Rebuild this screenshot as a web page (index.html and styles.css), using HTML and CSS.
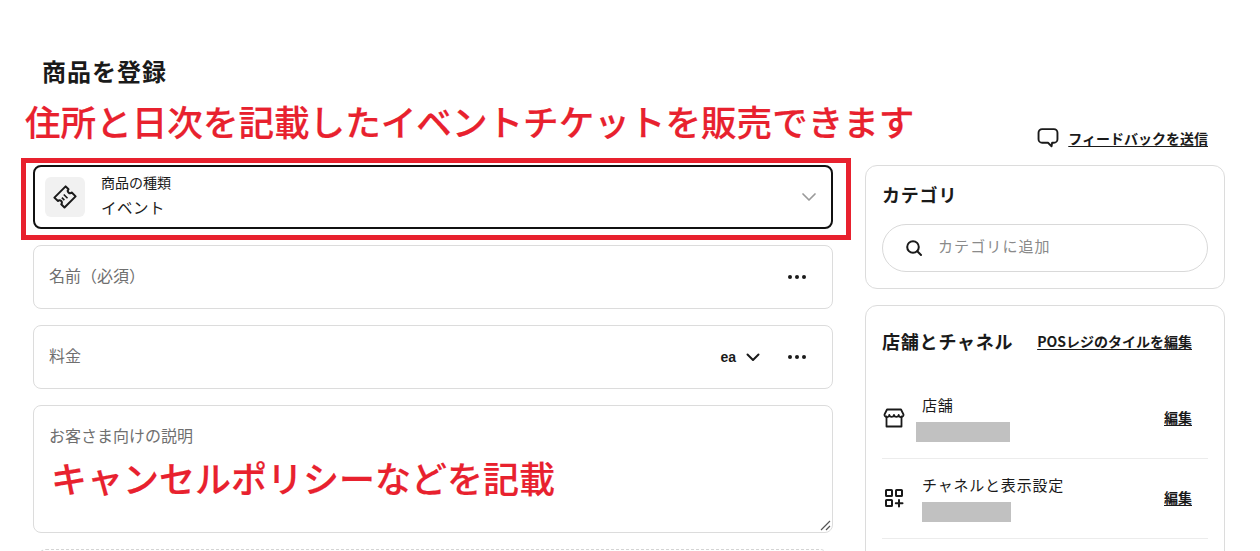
FILE: index.html
```html
<!DOCTYPE html>
<html lang="ja">
<head>
<meta charset="utf-8">
<title>商品を登録</title>
<link rel="stylesheet" href="styles.css">
</head>
<body>
<div class="page">
  <h1 class="title">商品を登録</h1>
  <div class="note note-top">住所と日次を記載したイベントチケットを販売できます</div>
  <div class="feedback">
    <svg class="fb-icon" width="26" height="26" viewBox="0 0 22 22" fill="none" stroke="#1a1a1a" stroke-width="1.6" stroke-linejoin="round" stroke-linecap="round"><path d="M6 3.500h10a3 3 0 0 1 3 3v5.500a3 3 0 0 1-3 3h-1.500l-.5 3-3-3H6a3 3 0 0 1-3-3V6.500a3 3 0 0 1 3-3z"/></svg>
    <a class="link">フィードバックを送信</a>
  </div>
  <div class="columns">
    <div class="col-main">
      <div class="highlight"></div>
      <div class="type-card">
        <div class="type-icon">
          <svg width="30" height="30" viewBox="0 0 24 24" fill="none" stroke="#1a1a1a" stroke-width="1.600" stroke-linejoin="round"><path d="M12.500 3.500l2.300 2.300a1.800 1.800 0 0 0 2.600 2.600l3.100 3.100-8.900 8.900-2.600-2.600a1.800 1.800 0 0 0-2.600-2.600L3.500 12.500z"/><path d="M11 10l3 3M9.500 12.500l2 2" stroke-width="1.300"/></svg>
        </div>
        <div class="type-text">
          <div class="type-label">商品の種類</div>
          <div class="type-value">イベント</div>
        </div>
        <svg class="type-chevron" width="16" height="10" viewBox="0 0 16 10" fill="none" stroke="#9a9a9a" stroke-width="1.7" stroke-linecap="round" stroke-linejoin="round"><path d="M2 2l6 6 6-6"/></svg>
      </div>
      <div class="field">
        <span class="placeholder">名前（必須）</span>
        <span class="dots"><i></i><i></i><i></i></span>
      </div>
      <div class="field">
        <span class="placeholder">料金</span>
        <span class="unit">ea</span>
        <svg class="unit-chevron" width="14" height="9" viewBox="0 0 14 9" fill="none" stroke="#1a1a1a" stroke-width="2" stroke-linecap="round" stroke-linejoin="round"><path d="M1.500 1.500L7 7l5.500-5.500"/></svg>
        <span class="dots"><i></i><i></i><i></i></span>
      </div>
      <div class="field-area">
        <span class="placeholder">お客さま向けの説明</span>
        <div class="note note-desc">キャンセルポリシーなどを記載</div>
        <svg class="resize" width="11" height="11" viewBox="0 0 11 11" fill="none" stroke="#555" stroke-width="1.2"><path d="M1 10L10 1M6 10l4-4"/></svg>
      </div>
      <div class="dropzone"></div>
    </div>
    <div class="col-side">
      <section class="card card-cat">
        <h2 class="card-title">カテゴリ</h2>
        <div class="search">
          <svg width="20" height="20" viewBox="0 0 20 20" fill="none" stroke="#1a1a1a" stroke-width="2" stroke-linecap="round"><circle cx="9" cy="9" r="5.800"/><path d="M13.300 13.300L17 17"/></svg>
          <span class="search-text">カテゴリに追加</span>
        </div>
      </section>
      <section class="card card-shop">
        <div class="shop-head">
          <h2 class="card-title">店舗とチャネル</h2>
          <a class="link">POSレジのタイルを編集</a>
        </div>
        <div class="row row-first">
          <svg class="row-icon" width="24" height="24" viewBox="0 0 24 24" fill="none" stroke="#1a1a1a" stroke-width="1.800" stroke-linejoin="round" stroke-linecap="round"><path d="M5 3.500h14l2.500 5a2.400 2.400 0 0 1-4.800.5 2.400 2.400 0 0 1-4.700 0 2.400 2.400 0 0 1-4.700 0 2.400 2.400 0 0 1-4.800-.5z"/><path d="M4.500 10.500v10h15v-10"/></svg>
          <div class="row-body">
            <div class="row-label">店舗</div>
            <div class="redact redact-store"></div>
          </div>
          <a class="link">編集</a>
        </div>
        <div class="row">
          <svg class="row-icon" width="24" height="24" viewBox="0 0 24 24" fill="none" stroke="#1a1a1a" stroke-width="2" stroke-linecap="round"><rect x="4" y="4" width="6" height="6" rx=".6"/><rect x="14" y="4" width="6" height="6" rx=".6"/><rect x="4" y="14" width="6" height="6" rx=".6"/><path d="M17 14v6.500M13.800 17.300h6.700"/></svg>
          <div class="row-body">
            <div class="row-label">チャネルと表示設定</div>
            <div class="redact redact-channel"></div>
          </div>
          <a class="link">編集</a>
        </div>
      </section>
    </div>
  </div>
</div>
</body>
</html>
```
FILE: styles.css
```css
* { box-sizing: border-box; }
html, body {
  margin: 0;
  height: 100%;
  overflow: hidden;
  background: #fff;
}
body {
  font-family: "Noto Sans CJK JP", "Noto Sans", sans-serif;
  color: #1a1a1a;
}
.page {
  position: relative;
  padding: 56px 35px 0 33px;
}
.title {
  margin: 0 0 0 9px;
  font-size: 24px;
  line-height: 30px;
  font-weight: 700;
  letter-spacing: 1px;
}
.note {
  position: absolute;
  color: #e8212e;
  font-weight: 500;
  white-space: nowrap;
  -webkit-text-stroke: .2px #e8212e;
}
.note-top {
  left: 25px;
  top: 94px;
  font-size: 35.600px;
  line-height: 54px;
}
.note-desc {
  left: 17px;
  top: 46px;
  font-size: 36px;
  line-height: 50px;
}
.feedback {
  display: flex;
  justify-content: flex-end;
  align-items: center;
  gap: 7px;
  margin-top: 41px;
  height: 22px;
  padding-right: 17px;
}
.link {
  font-size: 14px;
  line-height: 18px;
  font-weight: 700;
  color: #1a1a1a;
  text-decoration: underline;
  text-underline-offset: 2px;
  white-space: nowrap;
}
.columns {
  display: grid;
  grid-template-columns: 800px 360px;
  column-gap: 32px;
  margin-top: 16px;
  align-items: start;
}
.col-main {
  position: relative;
  display: flex;
  flex-direction: column;
  gap: 16px;
}
.highlight {
  position: absolute;
  left: -12px;
  top: -7px;
  width: 830px;
  height: 82px;
  border: 5px solid #e8212e;
}
.type-card {
  display: flex;
  align-items: center;
  height: 64px;
  padding: 0 14px 0 10px;
  border: 2px solid #111;
  border-radius: 8px;
  background: #fff;
}
.type-icon {
  display: flex;
  align-items: center;
  justify-content: center;
  width: 40px;
  height: 40px;
  border-radius: 6px;
  background: #f1f1f1;
}
.type-text {
  flex: 1;
  margin-left: 16px;
  padding-bottom: 4px;
}
.type-label {
  font-size: 14px;
  line-height: 20px;
}
.type-value {
  font-size: 15.500px;
  line-height: 24px;
  margin-top: 3px;
  letter-spacing: .5px;
}
.field {
  display: flex;
  align-items: center;
  height: 64px;
  padding: 0 26px 0 15px;
  border: 1px solid #dcdcdc;
  border-radius: 8px;
}
.placeholder {
  flex: 1;
  font-size: 16px;
  line-height: 22px;
  color: #6f6f6f;
  padding-bottom: 5px;
}
.dots {
  display: flex;
  gap: 3px;
}
.dots i {
  width: 4px;
  height: 4px;
  border-radius: 50%;
  background: #1a1a1a;
}
.unit {
  font-family: "Liberation Sans", sans-serif;
  font-size: 14px;
  font-weight: 700;
  margin-right: 10px;
}
.unit-chevron {
  margin-right: 28px;
}
.field-area {
  position: relative;
  height: 128px;
  padding: 17px 15px;
  border: 1px solid #dcdcdc;
  border-radius: 8px;
}
.resize {
  position: absolute;
  right: 1px;
  bottom: 1px;
}
.dropzone {
  height: 60px;
  margin: 0 5px;
  border: 1px dashed #d4d4d4;
  border-radius: 8px;
}
.col-side {
  display: flex;
  flex-direction: column;
  gap: 16px;
}
.card {
  padding: 0 16px;
  border: 1px solid #dcdcdc;
  border-radius: 12px;
  background: #fff;
}
.card-cat {
  height: 124px;
  padding-top: 14px;
}
.card-title {
  margin: 0;
  font-size: 18px;
  line-height: 28px;
  font-weight: 700;
  letter-spacing: .8px;
}
.search {
  display: flex;
  align-items: center;
  gap: 14px;
  height: 48px;
  margin-top: 16px;
  padding: 0 21px 0 21px;
  border: 1px solid #d9d9d9;
  border-radius: 24px;
}
.search-text {
  font-size: 15px;
  line-height: 22px;
  letter-spacing: 1.100px;
  color: #8a8a8a;
  padding-bottom: 4px;
}
.card-shop {
  height: 300px;
}
.shop-head {
  display: flex;
  align-items: center;
  justify-content: space-between;
  padding-right: 16px;
  margin-top: 21px;
}
.row {
  display: flex;
  align-items: center;
  height: 80px;
  padding-right: 16px;
  border-bottom: 1px solid #ececec;
}
.row .link {
  margin-bottom: 4px;
}
.row-first {
  margin-top: 24px;
}
.row-icon {
  flex: none;
  margin-bottom: 2px;
}
.row-body {
  flex: 1;
  margin-left: 16px;
}
.row-label {
  font-size: 15px;
  line-height: 22px;
  letter-spacing: .8px;
  margin-top: -2px;
}
.redact {
  height: 20px;
  background: #c1c1c1;
}
.redact-store {
  width: 94px;
  margin-left: -6px;
  margin-top: 6px;
}
.redact-channel {
  width: 89px;
  margin-top: 6px;
}
```
